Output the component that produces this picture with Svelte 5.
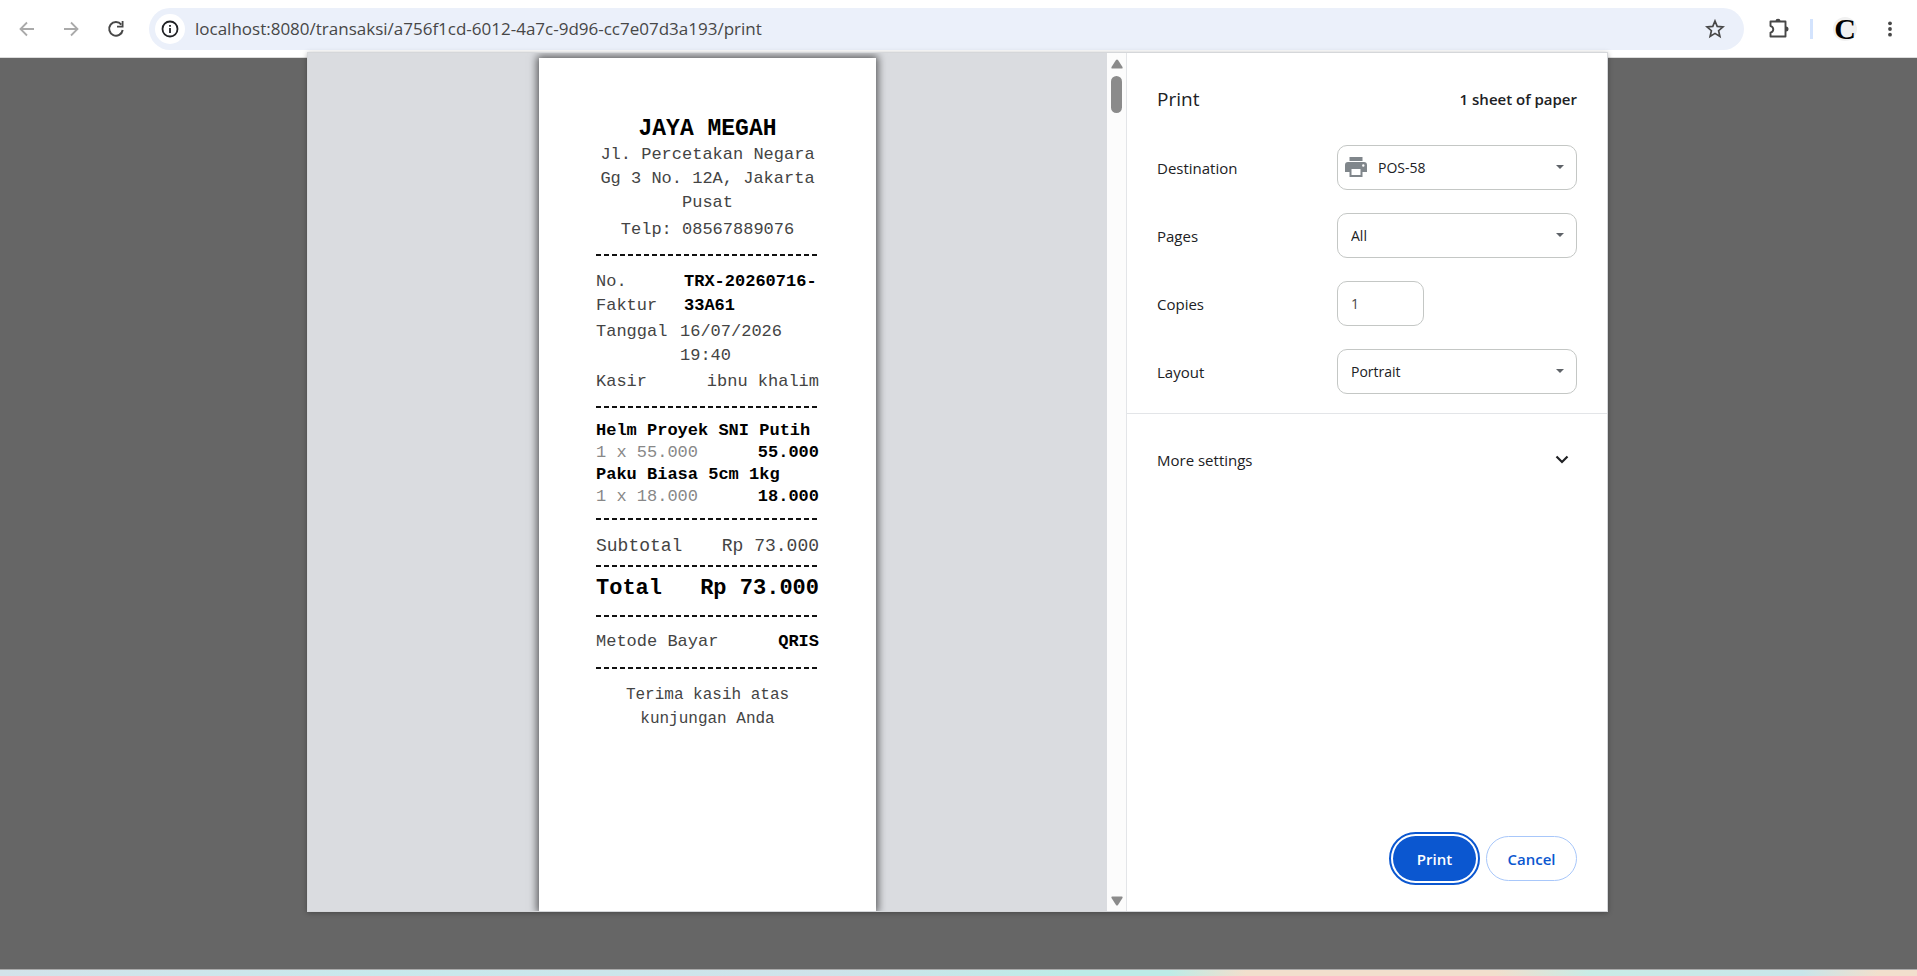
<script>
  const items = [
    { name: 'Helm Proyek SNI Putih', qty: '1 x 55.000', total: '55.000' },
    { name: 'Paku Biasa 5cm 1kg', qty: '1 x 18.000', total: '18.000' }
  ];
  let address = $state('localhost:8080/transaksi/a756f1cd-6012-4a7c-9d96-cc7e07d3a193/print');
  let copies = $state('1');
</script>

<div class="browser">
  <header class="toolbar">
    <nav class="nav">
      <button class="icon off" aria-label="Back">
        <svg width="16" height="16" viewBox="0 0 16 16"><path d="M15 8H2M8 1.5L1.5 8L8 14.5" fill="none" stroke="currentColor" stroke-width="1.8" /></svg>
      </button>
      <button class="icon off" aria-label="Forward">
        <svg width="16" height="16" viewBox="0 0 16 16"><path d="M1 8H14M8 1.5L14.5 8L8 14.5" fill="none" stroke="currentColor" stroke-width="1.8" /></svg>
      </button>
      <button class="icon" aria-label="Reload">
        <svg width="18" height="18" viewBox="0 0 18 18"><path d="M14.3 4.6A6.8 6.8 0 1 0 15.7 10" fill="none" stroke="currentColor" stroke-width="2" /><path d="M16.5 1V7.500H10V5.700H14.700V1Z" fill="currentColor" /></svg>
      </button>
    </nav>
    <div class="omnibox">
      <button class="site" aria-label="View site information">
        <svg width="18" height="18" viewBox="0 0 18 18"><circle cx="9" cy="9" r="7.500" fill="none" stroke="currentColor" stroke-width="1.8" /><path d="M8.100 8H9.900V13H8.100ZM8.100 5H9.900V6.800H8.100Z" fill="currentColor" /></svg>
      </button>
      <input class="url" type="text" aria-label="Address" bind:value={address} />
      <button class="icon" aria-label="Bookmark this tab">
        <svg width="20" height="20" viewBox="0 0 20 20"><path d="M10 2L12.200 7.400L18 7.900L13.600 11.700L14.900 17.400L10 14.400L5.100 17.400L6.400 11.700L2 7.900L7.800 7.400Z" fill="none" stroke="currentColor" stroke-width="1.7" /></svg>
      </button>
    </div>
    <div class="tools">
      <button class="icon" aria-label="Extensions">
        <svg width="22" height="22" viewBox="0 0 22 22"><path d="M2.500 3.500H17.500V18.500H2.500V14.600C6.200 13.800 6.200 8.900 2.500 8.100Z" fill="none" stroke="currentColor" stroke-width="1.9" stroke-linejoin="round" /><path d="M7.500 3A2.500 2.300 0 0 1 12.500 3ZM18 8.500A2.500 2.500 0 0 1 18 13.500Z" fill="currentColor" /></svg>
      </button>
      <span class="bar"></span>
      <button class="avatar" aria-label="Profile">C</button>
      <button class="icon menu" aria-label="Menu">
        <svg width="6" height="18" viewBox="0 0 6 18"><circle cx="3" cy="3.300" r="1.900" fill="currentColor" /><circle cx="3" cy="9" r="1.900" fill="currentColor" /><circle cx="3" cy="14.700" r="1.900" fill="currentColor" /></svg>
      </button>
    </div>
  </header>

  <main class="stage">
    <section class="dialog">
      <div class="preview">
        <article class="paper">
          <h1>JAYA MEGAH</h1>
          <p class="address">Jl. Percetakan Negara Gg 3 No. 12A, Jakarta Pusat</p>
          <p class="phone">Telp: 08567889076</p>
          <hr />
          <div class="meta">
            <div class="line"><span class="key">No. Faktur</span><b class="invoice">TRX-20260716-33A61</b></div>
            <div class="line"><span>Tanggal</span><span class="date">16/07/2026 19:40</span></div>
            <div class="line"><span>Kasir</span><span>ibnu khalim</span></div>
          </div>
          <hr />
          <div class="items">
            {#each items as item}
              <b>{item.name}</b>
              <div class="line"><span class="qty">{item.qty}</span><b>{item.total}</b></div>
            {/each}
          </div>
          <hr />
          <div class="line subtotal"><span>Subtotal</span><span>Rp 73.000</span></div>
          <hr />
          <div class="line total"><b>Total</b><b>Rp 73.000</b></div>
          <hr />
          <div class="line method"><span>Metode Bayar</span><b>QRIS</b></div>
          <hr />
          <p class="thanks">Terima kasih atas kunjungan Anda</p>
        </article>
      </div>
      <div class="scroll">
        <svg width="12" height="10" viewBox="0 0 12 10"><path d="M5 1Q6 0 7 1L11.500 8Q12 9.500 11 9.500H1Q0 9.500 .5 8Z" fill="#8b8b8b" /></svg>
        <span class="thumb"></span>
        <svg class="down" width="12" height="10" viewBox="0 0 12 10"><path d="M5 9Q6 10 7 9L11.500 2Q12 .5 11 .5H1Q0 .5 .5 2Z" fill="#8b8b8b" /></svg>
      </div>
      <form class="side" onsubmit={(e) => e.preventDefault()}>
        <div class="head"><h2>Print</h2><strong>1 sheet of paper</strong></div>
        <div class="fields">
          <div class="field">
            <label for="dest">Destination</label>
            <div class="pick printer">
              <svg class="glyph" width="22" height="20" viewBox="0 0 22 20"><path d="M4.500 0H17.500V4H4.500ZM3 5H19A3 3 0 0 1 22 8V15H17.500V20H4.500V15H0V8A3 3 0 0 1 3 5ZM6.500 12V18H15.500V12ZM18.300 7.300A1.200 1.200 0 1 0 18.300 9.700A1.200 1.200 0 1 0 18.300 7.300Z" fill="#80868b" fill-rule="evenodd" /></svg>
              <select id="dest"><option>POS-58</option></select>
              <svg class="caret" width="8" height="4" viewBox="0 0 8 4"><path d="M0 0H8L4 4Z" fill="#5f6368" /></svg>
            </div>
          </div>
          <div class="field">
            <label for="pages">Pages</label>
            <div class="pick">
              <select id="pages"><option>All</option></select>
              <svg class="caret" width="8" height="4" viewBox="0 0 8 4"><path d="M0 0H8L4 4Z" fill="#5f6368" /></svg>
            </div>
          </div>
          <div class="field">
            <label for="copies">Copies</label>
            <div class="cell"><input id="copies" type="text" inputmode="numeric" bind:value={copies} /></div>
          </div>
          <div class="field">
            <label for="layout">Layout</label>
            <div class="pick">
              <select id="layout"><option>Portrait</option></select>
              <svg class="caret" width="8" height="4" viewBox="0 0 8 4"><path d="M0 0H8L4 4Z" fill="#5f6368" /></svg>
            </div>
          </div>
        </div>
        <button type="button" class="more">
          <span>More settings</span>
          <svg width="14" height="10" viewBox="0 0 14 10"><path d="M1.500 1.500L7 7L12.500 1.500" fill="none" stroke="#202124" stroke-width="2.200" /></svg>
        </button>
        <div class="actions">
          <button type="submit" class="primary">Print</button>
          <button type="button" class="secondary">Cancel</button>
        </div>
      </form>
    </section>
  </main>
  <footer class="desktop"></footer>
</div>

<style>
  :global(body) { margin: 0; }
  .browser, .browser * { box-sizing: border-box; }
  .browser {
    min-height: 100vh;
    display: flex;
    flex-direction: column;
    background: #666;
    font-family: "Open Sans", "Noto Sans", sans-serif;
    font-size: 14px;
    color: #202124;
  }
  button, input, select { font: inherit; color: inherit; border: 0; background: none; padding: 0; margin: 0; }
  h1, h2, p { margin: 0; }
  svg { display: block; }

  .toolbar {
    height: 58px;
    display: flex;
    align-items: center;
    padding: 0 24px 0 19px;
    background: #fff;
    border-bottom: 1px solid #dcdcdc;
  }
  .nav { display: flex; align-items: center; gap: 28px; width: 130px; }
  .icon { display: grid; place-items: center; color: #474747; }
  .off { color: #aaa; }
  .omnibox {
    flex: 1;
    height: 42px;
    display: flex;
    align-items: center;
    padding: 0 19px 0 6px;
    border-radius: 21px;
    background: #ebf0fa;
  }
  .site { width: 30px; height: 30px; border-radius: 50%; background: #fff; display: grid; place-items: center; }
  .url { flex: 1; min-width: 0; padding-left: 10px; font-size: 17px; color: #474747; outline: none; }
  .tools { display: flex; align-items: center; gap: 20px; padding-left: 24px; }
  .bar { width: 3px; height: 20px; background: #d3e3fd; }
  .avatar {
    width: 24px; height: 24px;
    border-radius: 50%;
    background: #f1f1f1;
    font: bold 30px/24px "Liberation Serif", serif;
    color: #000;
  }
  .menu { padding-left: 10px; }

  .stage { flex: 1; display: flex; justify-content: center; align-items: flex-start; padding-right: 2px; }
  .dialog {
    width: 90%;
    max-width: 1301px;
    height: calc(100vh - 116px);
    margin-top: -6px;
    position: relative;
    display: flex;
    background: #fff;
    border: 1px solid #d5d7da;
    box-shadow: 0 1px 5px rgba(0, 0, 0, .3);
  }
  .preview { flex: 1; display: flex; justify-content: center; padding-top: 5px; background: #dadce0; overflow: hidden; }
  .paper {
    width: 337px;
    padding: 58px 57px 0;
    background: #fff;
    box-shadow: 0 0 8px 2px rgba(0, 0, 0, .6);
    font: 17px/24px "Liberation Mono", "Courier New", monospace;
    color: #444;
  }
  .paper b, h1 { color: #000; font-weight: bold; }
  h1 { font-size: 23px; line-height: 26px; text-align: center; }
  .address, .phone, .thanks { text-align: center; }
  .address { margin: 1px -4px 3px; }
  hr {
    height: 2px; margin: 0; border: 0;
    background: repeating-linear-gradient(90deg, #111 0 5px, transparent 5px 8px);
  }
  .phone { margin-bottom: 12px; }
  .line { display: flex; justify-content: space-between; }
  .meta { display: grid; gap: 2px; padding: 14px 0 12px; }
  .key { width: 70px; }
  .invoice { width: 135px; }
  .date { width: 139px; }
  .items { padding: 12px 0 10px; line-height: 22px; }
  .qty { color: #888; }
  .subtotal { padding: 14px 0 7px; font-size: 18px; }
  .total { font-size: 22px; line-height: 26px; padding: 9px 0 13px; }
  .method { padding: 13px 0; }
  .thanks { font-size: 16px; padding: 14px 20px; }

  .scroll {
    width: 19px;
    display: flex;
    flex-direction: column;
    align-items: center;
    padding: 6px 0 5px;
    background: #fcfcfc;
  }
  .thumb { width: 11px; height: 37px; margin-top: 7px; border-radius: 6px; background: #8b8b8b; }
  .down { margin-top: auto; }

  .side { width: 481px; display: flex; flex-direction: column; border-left: 1px solid #e3e5e8; }
  .head { display: flex; justify-content: space-between; align-items: center; height: 92px; padding: 0 30px; }
  h2 { font-size: 19px; font-weight: 400; }
  strong { font-size: 15px; font-weight: 600; }
  .fields { display: grid; gap: 23px; padding: 0 30px 19px; border-bottom: 1px solid #e3e5e8; }
  .field { display: flex; align-items: center; justify-content: space-between; font-size: 15px; }
  .pick, .cell { position: relative; width: 240px; height: 45px; font-size: 14px; }
  select, .cell input {
    appearance: none;
    width: 100%;
    height: 100%;
    padding: 0 13px;
    border: 1px solid #c4c7c5;
    border-radius: 10px;
    background: #fff;
  }
  .cell input { width: 87px; color: #474747; }
  .printer select { padding-left: 40px; }
  .glyph { position: absolute; left: 8px; top: 12px; }
  .caret { position: absolute; right: 13px; top: 20px; }
  .more { display: flex; justify-content: space-between; align-items: center; padding: 36px 38px 0 30px; font-size: 15px; }
  .actions { margin-top: auto; display: flex; justify-content: flex-end; gap: 10px; padding: 30px; }
  .actions button { height: 45px; border-radius: 23px; font-size: 15px; font-weight: 600; }
  .actions .primary { width: 83px; background: #0b57d0; color: #fff; outline: 2px solid #0b57d0; outline-offset: 2px; }
  .actions .secondary { width: 91px; border: 1px solid #a8c7fa; color: #0b57d0; }

  .desktop {
    height: 7px;
    border-top: 1px solid #aaa;
    background: linear-gradient(90deg, #d3e3ea, #c8e9ec 20%, #cfe3ea 43%, #bdece7 56%, #bdece7 61%, #f2dfcd 65%, #f2dfcd 78%, #c8ece6 83%, #c8e6ea 94%, #f2dfcd 98%);
  }
</style>
